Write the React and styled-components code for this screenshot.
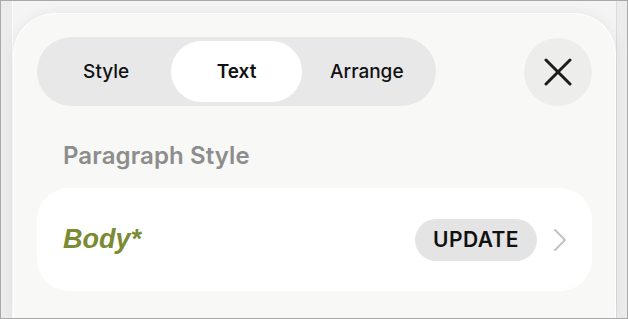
import React, { useState } from 'react';
import styled, { createGlobalStyle } from 'styled-components';

const GlobalStyle = createGlobalStyle`
  * { box-sizing: border-box; }
  html, body { margin: 0; padding: 0; }
  body {
    font-family: Inter, "Open Sans", "Liberation Sans", sans-serif;
    background: #ffffff;
  }
`;

const Frame = styled.div`
  width: 628px;
  height: 319px;
  border: 1px solid #a9a9a9;
  background: #ececec;
  display: flex;
  overflow: hidden;
`;

const BackPage = styled.div`
  flex: 1;
  margin-left: 11px;
  border-left: 1px solid #fbfbfb;
  border-right: 1px solid #dcdcdc;
  margin-right: 10px;
  background: #f4f4f4;
  display: flex;
  padding-top: 12px;
`;

const Panel = styled.div`
  flex: 1;
  background: #f8f8f6;
  border: 1px solid #ffffff;
  border-bottom: none;
  border-radius: 42px 42px 0 0;
  box-shadow: 0 0 14px rgba(0, 0, 0, 0.06);
  padding: 23px 23px 0 23px;
  display: flex;
  flex-direction: column;
`;

const TopRow = styled.div`
  display: flex;
  align-items: center;
  justify-content: space-between;
`;

const Segmented = styled.div`
  width: 399px;
  height: 69px;
  padding: 4px;
  border-radius: 35px;
  background: #e8e8e8;
  display: grid;
  grid-template-columns: 1fr 1fr 1fr;
`;

const Segment = styled.button`
  border: none;
  border-radius: 31px;
  background: ${(p) => (p.$active ? '#ffffff' : 'transparent')};
  font-family: inherit;
  font-size: 19px;
  font-weight: ${(p) => (p.$active ? 600 : 500)};
  color: #111111;
  cursor: pointer;
  padding: 0;
`;

const CloseButton = styled.button`
  width: 68px;
  height: 68px;
  border: none;
  border-radius: 50%;
  background: #ededec;
  display: flex;
  align-items: center;
  justify-content: center;
  padding: 0;
  cursor: pointer;
`;

const SectionLabel = styled.div`
  margin: 35px 0 0 26px;
  font-size: 24px;
  font-weight: 600;
  color: #8d8d8d;
  line-height: 30px;
  letter-spacing: 0.1px;
`;

const Card = styled.div`
  margin-top: 17px;
  height: 103px;
  border-radius: 32px;
  background: #ffffff;
  display: flex;
  align-items: center;
  padding: 0 25px 0 26px;
`;

const StyleName = styled.div`
  flex: 1;
  font-family: "Liberation Sans", Arial, sans-serif;
  font-size: 27px;
  font-weight: 700;
  font-style: italic;
  color: #7a8b34;
`;

const UpdateBadge = styled.button`
  height: 42px;
  width: 122px;
  padding: 0;
  border: none;
  border-radius: 21px;
  background: #e4e4e4;
  font-family: inherit;
  font-size: 21px;
  font-weight: 600;
  letter-spacing: 0.4px;
  color: #111111;
  cursor: pointer;
`;

const Chevron = styled.div`
  margin-left: 16px;
  display: flex;
  align-items: center;
`;

const tabs = ['Style', 'Text', 'Arrange'];

const App = () => {
  const [tab, setTab] = useState('Text');

  return (
    <>
      <GlobalStyle />
      <Frame>
        <BackPage>
          <Panel>
            <TopRow>
              <Segmented>
                {tabs.map((t) => (
                  <Segment key={t} $active={tab === t} onClick={() => setTab(t)}>
                    {t}
                  </Segment>
                ))}
              </Segmented>
              <CloseButton aria-label="Close">
                <svg width="28" height="28" viewBox="0 0 28 28">
                  <path d="M2 2 L26 26 M26 2 L2 26" stroke="#1c1c1c" strokeWidth="3" strokeLinecap="round" />
                </svg>
              </CloseButton>
            </TopRow>
            <SectionLabel>Paragraph Style</SectionLabel>
            <Card>
              <StyleName>Body*</StyleName>
              <UpdateBadge>UPDATE</UpdateBadge>
              <Chevron>
                <svg width="14" height="24" viewBox="0 0 14 24">
                  <path d="M2 2 L12 12 L2 22" fill="none" stroke="#c2c2c2" strokeWidth="2" strokeLinecap="round" strokeLinejoin="round" />
                </svg>
              </Chevron>
            </Card>
          </Panel>
        </BackPage>
      </Frame>
    </>
  );
};

export default App;
